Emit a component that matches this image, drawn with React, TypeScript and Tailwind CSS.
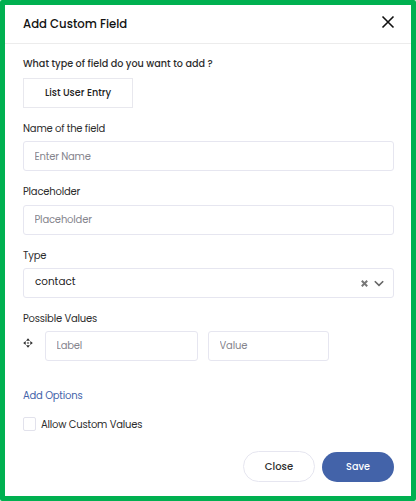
import { useState, type ReactNode } from "react";

const inputClass =
  "h-[30px] rounded-[3px] border border-[#e6e6f0] bg-white px-[10.5px] text-[10px] tracking-[-0.18px] text-gray-700 placeholder:text-[#85858d] outline-none";

function Label({ htmlFor, children }: { htmlFor?: string; children: ReactNode }) {
  return (
    <label htmlFor={htmlFor} className="block h-[16px] whitespace-nowrap leading-[18px]">
      {children}
    </label>
  );
}

function MoveIcon() {
  return (
    <svg width="10" height="10" viewBox="0 0 10 10" fill="#2f2f2f" aria-hidden="true">
      <path d="M5 .2l2 2.5H3zM5 9.8L3 7.3h4zM.2 5l2.5-2v4zM9.8 5L7.3 7V3z" />
      <path d="M4.5 3.9h1v.6h.6v1h-.6v.6h-1v-.6h-.6v-1h.6z" opacity="0.7" />
    </svg>
  );
}

export default function App() {
  const [allowCustom, setAllowCustom] = useState(false);

  return (
    <div className="flex h-[501px] w-[416px] flex-col rounded-[2px] border-[5px] border-[#00b050] bg-white font-['Poppins','Inter',sans-serif] text-[10px] tracking-[-0.2px] text-[#2c2c2c]">
      <header className="flex h-[39px] shrink-0 items-center justify-between border-b border-[#ececec] pl-[18px] pr-[16px]">
        <h1 className="pt-[2px] text-[11.7px] font-medium tracking-normal text-[#111]">Add Custom Field</h1>
        <button type="button" aria-label="Close dialog" className="mb-[4px]">
          <svg width="14" height="14" viewBox="0 0 14 14" fill="none" stroke="#111" strokeWidth="1.6">
            <path d="M1.5 1.5l11 11M12.5 1.5l-11 11" />
          </svg>
        </button>
      </header>

      <form className="flex flex-1 flex-col pl-[18px] pr-[17px] pt-[11px]">
        <p className="h-[16px] whitespace-nowrap text-[9.65px] font-medium leading-[17px] tracking-normal">
          What type of field do you want to add ?
        </p>
        <button
          type="button"
          className="mt-[7px] h-[30px] w-[110px] border border-[#e8e8ee] text-[9.65px] font-medium tracking-normal text-[#222]"
        >
          List User Entry
        </button>

        <div className="mt-[12px] flex flex-col gap-[5px]">
          <Label htmlFor="name">Name of the field</Label>
          <input id="name" placeholder="Enter Name" className={`${inputClass} pt-px`} />
        </div>

        <div className="mt-[12px] flex flex-col gap-[6px]">
          <Label htmlFor="placeholder">Placeholder</Label>
          <input id="placeholder" placeholder="Placeholder" className={inputClass} />
        </div>

        <div className="mt-[12px] flex flex-col gap-[5px]">
          <Label>Type</Label>
          <div className="flex h-[30px] items-center rounded-[3px] border border-[#e6e6f0] pl-[11px] pr-[9px]">
            <span className="flex-1 pb-[2px] text-[10.4px] tracking-normal text-[#222]">contact</span>
            <svg width="7" height="7" viewBox="0 0 7 7" stroke="#777" strokeWidth="2">
              <path d="M.8.8l5.4 5.4M6.2.8L.8 6.2" />
            </svg>
            <svg className="ml-[6px]" width="10" height="7" viewBox="0 0 10 7" fill="none" stroke="#666" strokeWidth="1.6">
              <path d="M.8 1.2L5 5.4l4.2-4.2" />
            </svg>
          </div>
        </div>

        <div className="mt-[12px] flex flex-col gap-[5px]">
          <Label>Possible Values</Label>
          <div className="flex">
            <span className="w-[22px] pt-[7px]">
              <MoveIcon />
            </span>
            <input aria-label="Label" placeholder="Label" className={`${inputClass} w-[153px]`} />
            <input aria-label="Value" placeholder="Value" className={`${inputClass} ml-[10px] w-[121px]`} />
          </div>
        </div>

        <button type="button" className="mt-[27px] h-[16px] self-start leading-[16px] text-[#4363a9]">
          Add Options
        </button>

        <label className="mt-[12px] flex h-[16px] items-center">
          <input
            type="checkbox"
            checked={allowCustom}
            onChange={(e) => setAllowCustom(e.target.checked)}
            className="h-[14px] w-[13px] appearance-none rounded-[2px] border border-[#e2e2ec] checked:bg-[#4363a9]"
          />
          <span className="ml-[5px]">Allow Custom Values</span>
        </label>

        <div className="mt-[19px] flex items-end justify-end gap-[7px] font-medium tracking-normal">
          <button type="button" className="h-[31px] w-[72px] rounded-full border border-[#e6e6f0]">
            Close
          </button>
          <button type="button" className="h-[30px] w-[72px] rounded-full bg-[#4363a9] text-[9.65px] text-white">
            Save
          </button>
        </div>
      </form>
    </div>
  );
}
